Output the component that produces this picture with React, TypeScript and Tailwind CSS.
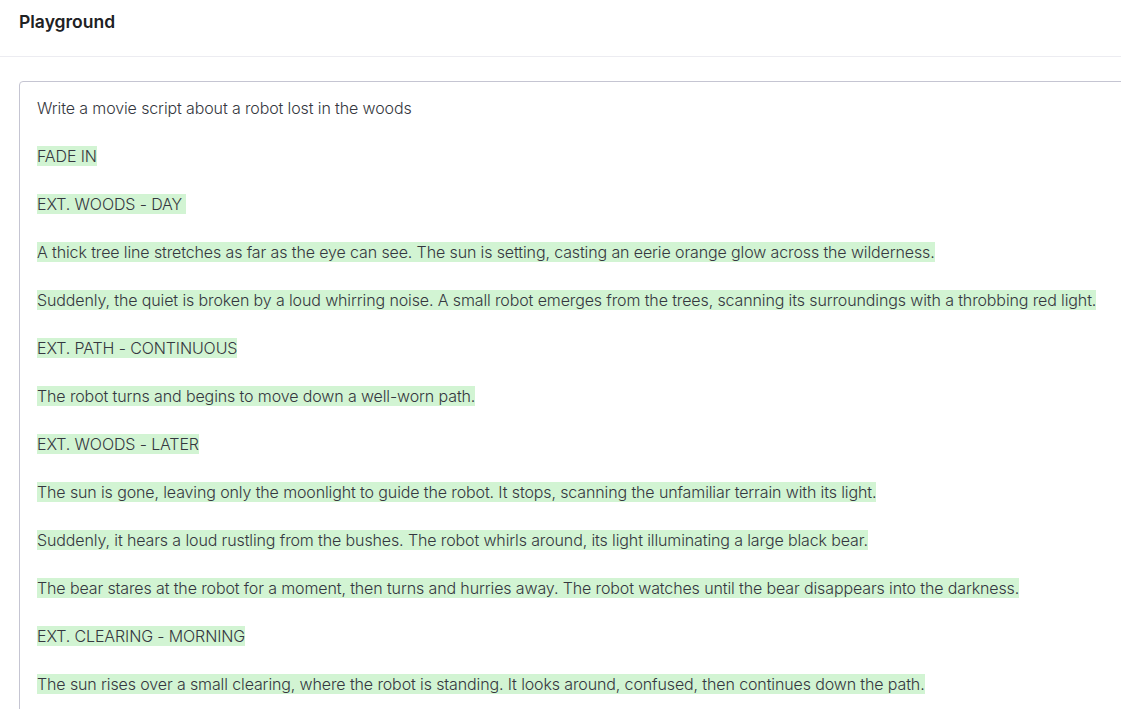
import React from 'react';

const lines: string[] = [
  'FADE IN',
  'EXT. WOODS - DAY ',
  'A thick tree line stretches as far as the eye can see. The sun is setting, casting an eerie orange glow across the wilderness.',
  'Suddenly, the quiet is broken by a loud whirring noise. A small robot emerges from the trees, scanning its surroundings with a throbbing red light.',
  'EXT. PATH - CONTINUOUS',
  'The robot turns and begins to move down a well-worn path.',
  'EXT. WOODS - LATER',
  'The sun is gone, leaving only the moonlight to guide the robot. It stops, scanning the unfamiliar terrain with its light.',
  'Suddenly, it hears a loud rustling from the bushes. The robot whirls around, its light illuminating a large black bear.',
  'The bear stares at the robot for a moment, then turns and hurries away. The robot watches until the bear disappears into the darkness.',
  'EXT. CLEARING - MORNING',
  'The sun rises over a small clearing, where the robot is standing. It looks around, confused, then continues down the path.',
];

export default function App() {
  return (
    <div className="h-[709px] w-[1121px] overflow-hidden bg-white font-['Inter',sans-serif] text-[#353740]">
      <header className="h-[57px] border-b border-[#ececf1] px-[19px] pt-[11px]">
        <h1 className="text-[17.5px] leading-[22px] font-semibold text-[#202123]">Playground</h1>
      </header>

      <div className="pl-[19px] pt-[24px]">
        <div className="w-[1200px] rounded-[4px] border border-[#c5c5d2] px-[17px] pt-[14px] pb-[40px] text-[16px] leading-[24px] font-light tracking-[-0.12px] whitespace-pre">
          <p>Write a movie script about a robot lost in the woods</p>
          {lines.map((line, i) => (
            <p key={i} className="mt-[24px]">
              <span className="bg-[#d2f4d3]">{line}</span>
            </p>
          ))}
        </div>
      </div>
    </div>
  );
}
